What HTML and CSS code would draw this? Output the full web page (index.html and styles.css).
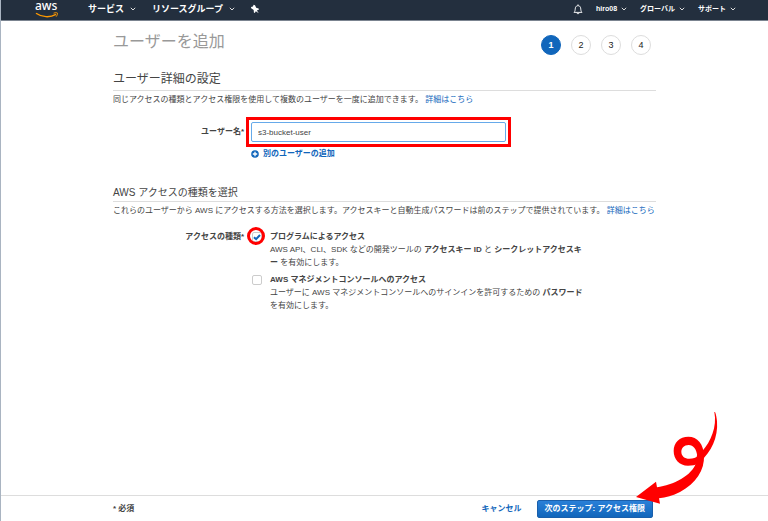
FILE: index.html
```html
<!DOCTYPE html>
<html lang="ja">
<head>
    <meta charset="UTF-8">
    <meta name="viewport" content="width=device-width, initial-scale=1.0">
    <link rel="stylesheet" href="styles.css">
    <title>ユーザーを追加</title>
</head>
<body>
    <header class="navbar">
        <a class="navbar__logo" href="#">
            <span class="navbar__logo-text">aws</span>
            <svg class="navbar__smile" viewBox="0 0 24 6" fill="none" stroke="#f90">
                <path d="M1 1.2C7 5.4 15 5.8 21 2.4" stroke-width="1.4"/>
                <path d="M18.6 1.2c1.6-.6 3.2-.6 3.8-.2.3.8-.3 2.4-1.2 3.6"/>
            </svg>
        </a>
        <nav class="navbar__menu">
            <a class="navbar__item" href="#">サービス
                <svg class="chevron" viewBox="0 0 6 4"><path d="M.8.8L3 3 5.2.8"/></svg>
            </a>
            <a class="navbar__item" href="#">リソースグループ
                <svg class="chevron" viewBox="0 0 6 4"><path d="M.8.8L3 3 5.2.8"/></svg>
            </a>
            <a class="navbar__item" href="#" aria-label="ピン">
                <svg class="navbar__pin" viewBox="0 0 10 10" fill="#fff">
                    <path d="M2.6.8L4 1.2 5.2 3.8 7.6 4.6 8 5.6 5.9 6.5 7.8 9.2 4.8 7.3 3.8 9 2.9 8.5 2.7 5.9.2 4.2 0 2.9 1.9 2.6z"/>
                </svg>
            </a>
        </nav>
        <nav class="navbar__menu navbar__menu--right">
            <a class="navbar__item" href="#" aria-label="通知">
                <svg class="navbar__bell" viewBox="0 0 10 11" fill="none" stroke="#fff" stroke-width=".9">
                    <path d="M1 8.4C2.4 7.2 2 5.6 2.4 3.8 2.8 2.3 3.8 1.7 5 1.7s2.2.6 2.6 2.1C8 5.6 7.6 7.2 9 8.4zM5 .4v1.3M3.8 8.6c.2 1.6 2.2 1.6 2.4 0"/>
                </svg>
            </a>
            <a class="navbar__item" href="#">hiro08
                <svg class="chevron" viewBox="0 0 6 4"><path d="M.8.8L3 3 5.2.8"/></svg>
            </a>
            <a class="navbar__item" href="#">グローバル
                <svg class="chevron" viewBox="0 0 6 4"><path d="M.8.8L3 3 5.2.8"/></svg>
            </a>
            <a class="navbar__item" href="#">サポート
                <svg class="chevron" viewBox="0 0 6 4"><path d="M.8.8L3 3 5.2.8"/></svg>
            </a>
        </nav>
    </header>

    <main class="wizard">
        <div class="wizard__header">
            <h1 class="wizard__title">ユーザーを追加</h1>
            <ol class="steps">
                <li class="steps__item steps__item--active">1</li>
                <li class="steps__item">2</li>
                <li class="steps__item">3</li>
                <li class="steps__item">4</li>
            </ol>
        </div>

        <section class="section">
            <h2 class="section__title">ユーザー詳細の設定</h2>
            <p class="section__text">同じアクセスの種類とアクセス権限を使用して複数のユーザーを一度に追加できます。 <a class="link" href="#">詳細はこちら</a></p>
            <div class="form-row form-row--name">
                <label class="form-row__label" for="user-name">ユーザー名*</label>
                <div class="form-row__field marked-box">
                    <input class="text-input" id="user-name" type="text" value="s3-bucket-user">
                </div>
            </div>
            <div class="form-row form-row--add">
                <a class="link link--add" href="#">
                    <svg class="link__icon" viewBox="0 0 8 8">
                        <circle cx="4" cy="4" r="3.8" fill="#1166bb"/>
                        <path d="M4 1.8v4.4M1.8 4h4.4" stroke="#fff" stroke-width="1.3"/>
                    </svg>
                    別のユーザーの追加
                </a>
            </div>
        </section>

        <section class="section section--access">
            <h2 class="section__title section__title--small">AWS アクセスの種類を選択</h2>
            <p class="section__text">これらのユーザーから AWS にアクセスする方法を選択します。アクセスキーと自動生成パスワードは前のステップで提供されています。 <a class="link" href="#">詳細はこちら</a></p>
            <div class="form-row form-row--access">
                <span class="form-row__label" id="access-label">アクセスの種類*</span>
                <div class="options" role="group" aria-labelledby="access-label">
                    <div class="option">
                        <span class="option__check marked-circle">
                            <input class="checkbox" id="program" type="checkbox" checked>
                            <svg class="checkbox__tick" viewBox="0 0 10 10"><path d="M2 5.2l2.1 2L8 3"/></svg>
                        </span>
                        <div class="option__body">
                            <label class="option__name" for="program">プログラムによるアクセス</label>
                            <p class="option__text">AWS API、CLI、SDK などの開発ツールの <b>アクセスキー ID</b> と <b>シークレットアクセスキー</b> を有効にします。</p>
                        </div>
                    </div>
                    <div class="option">
                        <span class="option__check">
                            <input class="checkbox" id="console" type="checkbox">
                            <svg class="checkbox__tick" viewBox="0 0 10 10"><path d="M2 5.2l2.1 2L8 3"/></svg>
                        </span>
                        <div class="option__body">
                            <label class="option__name" for="console">AWS マネジメントコンソールへのアクセス</label>
                            <p class="option__text">ユーザーに AWS マネジメントコンソールへのサインインを許可するための <b>パスワード</b> を有効にします。</p>
                        </div>
                    </div>
                </div>
            </div>
        </section>
    </main>

    <footer class="footer">
        <span class="footer__note">* 必須</span>
        <a class="link link--cancel" href="#">キャンセル</a>
        <button class="button" type="button">次のステップ: アクセス権限</button>
        <svg class="footer__arrow" viewBox="0 0 474 363" fill="#f00">
            <path d="M313 36C322 80 302 126 277 153L271 184C303 158 325 112 321 64 320 52 318 42 315 36z"/>
            <path fill-rule="evenodd" d="M235 110C262 110 282 131 282 170 278 187 258 197 234 197 208 197 191 178 191 153 191 127 209 110 235 110zM236 135C222 135 214 145 214 155 214 168 224 176 238 176 250 176 258 173 262 169 260 147 250 135 236 135z"/>
            <path d="M261 165L282 165C284 212 258 250 210 276 188 287 168 292 147 295L150 311 78 291 138 245 141 262C190 255 246 228 259 187z"/>
        </svg>
    </footer>
</body>
</html>
```

FILE: styles.css
```css
* {
    box-sizing: border-box;
}
body {
    margin: 0;
    min-height: 100vh;
    display: flex;
    flex-direction: column;
    position: relative;
    font-family: "Liberation Sans", "Noto Sans CJK JP", sans-serif;
    font-size: 8px;
    line-height: 12px;
    color: #444;
    background-color: #fff;
    border-left: 1px solid #a9b4c1;
}
a {
    text-decoration: none;
}
h1,
h2,
p,
ol {
    margin: 0;
    padding: 0;
    font-weight: normal;
}

.navbar {
    display: flex;
    align-items: center;
    height: 21px;
    padding: 0 32px 2px 34px;
    background-color: #232f3e;
    border-bottom: 1px solid #7b8490;
}
.navbar__logo {
    width: 24px;
    margin-right: 29px;
    color: #fff;
}
.navbar__logo-text {
    display: block;
    font-family: "Noto Sans", sans-serif;
    font-size: 12px;
    font-weight: 500;
    line-height: 12px;
}
.navbar__smile {
    display: block;
    width: 24px;
    height: 6px;
}
.navbar__menu {
    display: flex;
    align-items: center;
    gap: 16px;
}
.navbar__menu--right {
    margin-left: auto;
    gap: 13px;
}
.navbar__item {
    display: flex;
    align-items: center;
    gap: 6px;
    color: #fff;
    font-size: 9px;
    font-weight: bold;
}
.navbar__menu--right .navbar__item {
    gap: 4px;
    font-size: 7px;
}
.navbar__pin {
    width: 10px;
    height: 10px;
}
.navbar__bell {
    width: 10px;
    height: 11px;
}
.chevron {
    width: 6px;
    height: 4px;
    fill: none;
    stroke: #ddd;
    stroke-width: 1;
}

.wizard {
    flex: 1;
    padding: 10px 112px 20px;
}
.wizard__header {
    display: flex;
    justify-content: space-between;
    align-items: flex-start;
}
.wizard__title {
    font-size: 16px;
    line-height: 22px;
    color: #999;
}
.steps {
    display: flex;
    gap: 10px;
    margin: 4px 5px 0 0;
    list-style: none;
}
.steps__item {
    width: 20px;
    height: 20px;
    border: 1px solid #ddd;
    border-radius: 50%;
    font-size: 9px;
    line-height: 18px;
    text-align: center;
    color: #222;
}
.steps__item--active {
    color: #fff;
    font-weight: bold;
    background-color: #1166bb;
    border-color: #1166bb;
}

.section {
    margin-top: 14px;
}
.section--access {
    margin-top: 25px;
}
.section__title {
    font-size: 12px;
    line-height: 21px;
    border-bottom: 1px solid #ddd;
}
.section__title--small {
    font-size: 10px;
    line-height: 16px;
}
.section__text {
    margin-top: 3px;
}
.link {
    color: #1166bb;
}
.link--add {
    display: flex;
    align-items: center;
    gap: 4px;
    font-weight: bold;
}
.link--cancel {
    font-weight: bold;
}
.link__icon {
    width: 8px;
    height: 8px;
}

.form-row {
    display: flex;
    gap: 7px;
}
.form-row--name {
    align-items: center;
    margin-top: 16px;
}
.form-row--add {
    margin-top: 6px;
    padding-left: 138px;
}
.form-row--access {
    margin-top: 14px;
}
.form-row__label {
    width: 131px;
    font-weight: bold;
    text-align: right;
}
.form-row__field {
    width: 255px;
}
.text-input {
    display: block;
    width: 100%;
    height: 20px;
    padding: 0 6px;
    border: 1px solid #66aaea;
    border-radius: 2px;
    font-family: inherit;
    font-size: 8px;
    color: #444;
}

/* red markers drawn around the fields */
.marked-box,
.marked-circle {
    position: relative;
}
.marked-box::after {
    content: "";
    position: absolute;
    inset: -5px;
    border: 3px solid #f00;
    pointer-events: none;
}
.marked-circle::after {
    content: "";
    position: absolute;
    inset: -5px -3px -3px -5px;
    border: 3px solid #f00;
    border-radius: 50%;
    pointer-events: none;
}

.options {
    display: flex;
    flex-direction: column;
    gap: 5px;
}
.option {
    display: flex;
    gap: 8px;
}
.option__check {
    display: grid;
    width: 10px;
    height: 10px;
    margin: 1px 0 0 1px;
}
.checkbox,
.checkbox__tick {
    grid-area: 1 / 1;
    width: 10px;
    height: 10px;
}
.checkbox {
    appearance: none;
    margin: 0;
    border: 1px solid #ccc;
    border-radius: 2px;
    background-color: #fff;
}
.checkbox__tick {
    visibility: hidden;
    fill: none;
    stroke: #1166bb;
    stroke-width: 2;
    pointer-events: none;
}
.checkbox:checked + .checkbox__tick {
    visibility: visible;
}
.option__body {
    max-width: 317px;
}
.option__name {
    display: block;
    font-weight: bold;
}
.option__text {
    line-height: 13px;
    word-break: break-all;
}

.footer {
    position: relative;
    display: flex;
    align-items: center;
    height: 26px;
    padding: 0 115px 0 112px;
    border-top: 1px solid #ddd;
}
.footer__note {
    margin-right: auto;
    font-weight: bold;
}
.button {
    height: 18px;
    margin-left: 15px;
    padding: 0 7px;
    border: 1px solid #1a5fab;
    border-radius: 2px;
    background: linear-gradient(#2a80d8, #1166bb);
    font-family: inherit;
    font-size: 8px;
    font-weight: bold;
    line-height: 16px;
    color: #fff;
}
.footer__arrow {
    position: absolute;
    right: 0;
    bottom: 0;
    width: 158px;
    height: 121px;
    pointer-events: none;
}
```
